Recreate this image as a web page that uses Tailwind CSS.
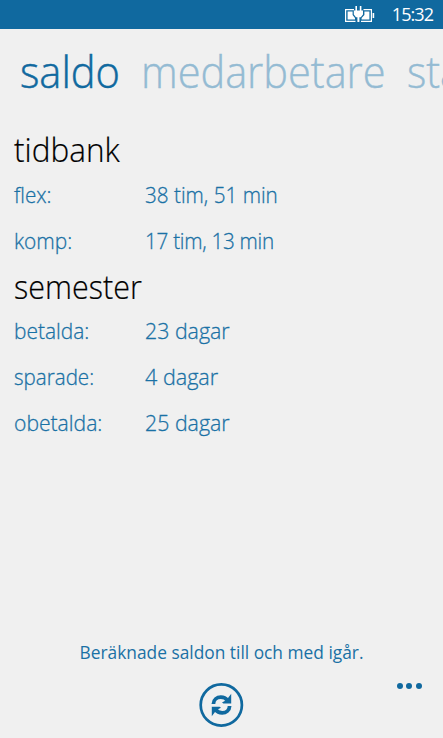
<!DOCTYPE html>
<html lang="sv">
<head>
  <meta charset="UTF-8" />
  <meta name="viewport" content="width=device-width, initial-scale=1.0"/>
  <title>Saldo</title>
  <script src="https://cdn.jsdelivr.net/npm/@tailwindcss/browser@4"></script>
</head>
<body class="bg-[#f0f0f0]">

  <div class="w-[443px] h-[738px] overflow-hidden flex flex-col bg-[#f0f0f0] text-[#1a71a5] font-['Open_Sans','Noto_Sans',sans-serif] font-light">

    <!-- Status bar -->
    <div class="h-[29px] shrink-0 bg-[#10699f] text-white flex items-center justify-end pr-[10px]">
      <svg class="w-[31px] h-[22px] mr-[17px]" viewBox="0 0 31 22" fill="none">
        <path d="M10 5.6H1.6V17.4H11.5M19.5 5.6H27.4V17.4H17" stroke="#fff" stroke-width="1.2"/>
        <path d="M3.6 7.5H8.6V11L11 14V15.6H3.6ZM20.4 7.5H25.4V15.6H17.6V14L20.4 11Z" fill="#fff"/>
        <path d="M28.6 9H30.2V14H28.6Z" fill="#fff"/>
        <path d="M11.4 2H13V6.5H15.8V2H17.4V6.5H19V10.5L16.8 13.3H15.4V18H13.4V13.3H12L9.8 10.5V6.5H11.4Z" fill="#fff"/>
      </svg>
      <span class="text-[18px] leading-[26px] pb-[2px] font-normal tracking-[-0.95px]">15:32</span>
    </div>

    <!-- Pivot headers -->
    <div class="mt-[12px] pl-[20px] h-[60px] shrink-0 flex whitespace-nowrap text-[44px] leading-[60px]">
      <h1 class="w-[121px] shrink-0 origin-left scale-x-[0.945] text-[#10699f] [-webkit-text-stroke:0.5px_#10699f]">saldo</h1>
      <span class="w-[266px] shrink-0 origin-left scale-x-[0.943] text-[#94bbd3] [-webkit-text-stroke:0.4px_#94bbd3]">medarbetare</span>
      <span class="origin-left scale-x-[0.94] text-[#94bbd3] [-webkit-text-stroke:0.4px_#94bbd3]">sta</span>
    </div>

    <!-- Balances -->
    <div class="mt-[26px] pl-[14px] text-[22px] leading-[46px]">
      <h2 class="origin-left scale-x-[0.955] text-[33px] leading-[46px] text-black [-webkit-text-stroke:0.2px_#000]">tidbank</h2>
      <dl class="-mt-[2px] grid grid-cols-[131px_1fr] [-webkit-text-stroke:0.3px_#1a71a5] [&>*]:origin-left">
        <dt class="scale-x-[0.94]">flex:</dt><dd class="scale-x-[0.94]">38 tim, 51 min</dd>
        <dt class="scale-x-[0.95]">komp:</dt><dd class="scale-x-[0.94] tracking-[-0.3px]">17 tim, 13 min</dd>
      </dl>
      <h2 class="origin-left scale-x-[0.925] text-[33px] leading-[47px] text-black [-webkit-text-stroke:0.2px_#000]">semester</h2>
      <dl class="-mt-[3px] grid grid-cols-[131px_1fr] [-webkit-text-stroke:0.3px_#1a71a5] [&>*]:origin-left">
        <dt class="scale-x-[0.95]">betalda:</dt><dd class="scale-x-[0.97]">23 dagar</dd>
        <dt class="scale-x-[0.935]">sparade:</dt><dd class="scale-x-[0.98]">4 dagar</dd>
        <dt class="scale-x-[0.96]">obetalda:</dt><dd class="scale-x-[0.97]">25 dagar</dd>
      </dl>
    </div>

    <p class="mt-auto text-center scale-x-[0.963] text-[18px] leading-[26px] font-normal">Beräknade saldon till och med igår.</p>

    <!-- App bar -->
    <div class="h-[73px] shrink-0 grid grid-cols-[1fr_46px_1fr] text-[#10699f]">
      <button class="col-start-2 mt-[17px] -ml-[1px] w-[46px] h-[46px]">
        <svg class="w-[46px] h-[46px]" viewBox="0 0 46 46" fill="none">
          <circle cx="23.3" cy="23" r="20.6" stroke="currentColor" stroke-width="2.7"/>
          <path d="M15.4 22C15.6 17.5 19 15.2 22.8 15.2C26 15.2 28 16.4 29.4 18.4" stroke="currentColor" stroke-width="3.8"/>
          <path d="M33.2 11.8V21.4H25.4L24 20.4L28.5 18Z" fill="currentColor"/>
          <path d="M31.6 24C31.4 28.5 28 30.9 24.2 30.9C21 30.9 19 29.7 17.6 27.7" stroke="currentColor" stroke-width="3.8"/>
          <path d="M13.8 34.3V24.7H21.6L23 25.7L18.5 28.1Z" fill="currentColor"/>
        </svg>
      </button>
      <div class="flex justify-end gap-[3.5px] pt-[17.5px] pr-[21.5px]">
        <i class="size-[6px] rounded-full bg-[#10699f]"></i>
        <i class="size-[6px] rounded-full bg-[#10699f]"></i>
        <i class="size-[6px] rounded-full bg-[#10699f]"></i>
      </div>
    </div>
  </div>

</body>
</html>
